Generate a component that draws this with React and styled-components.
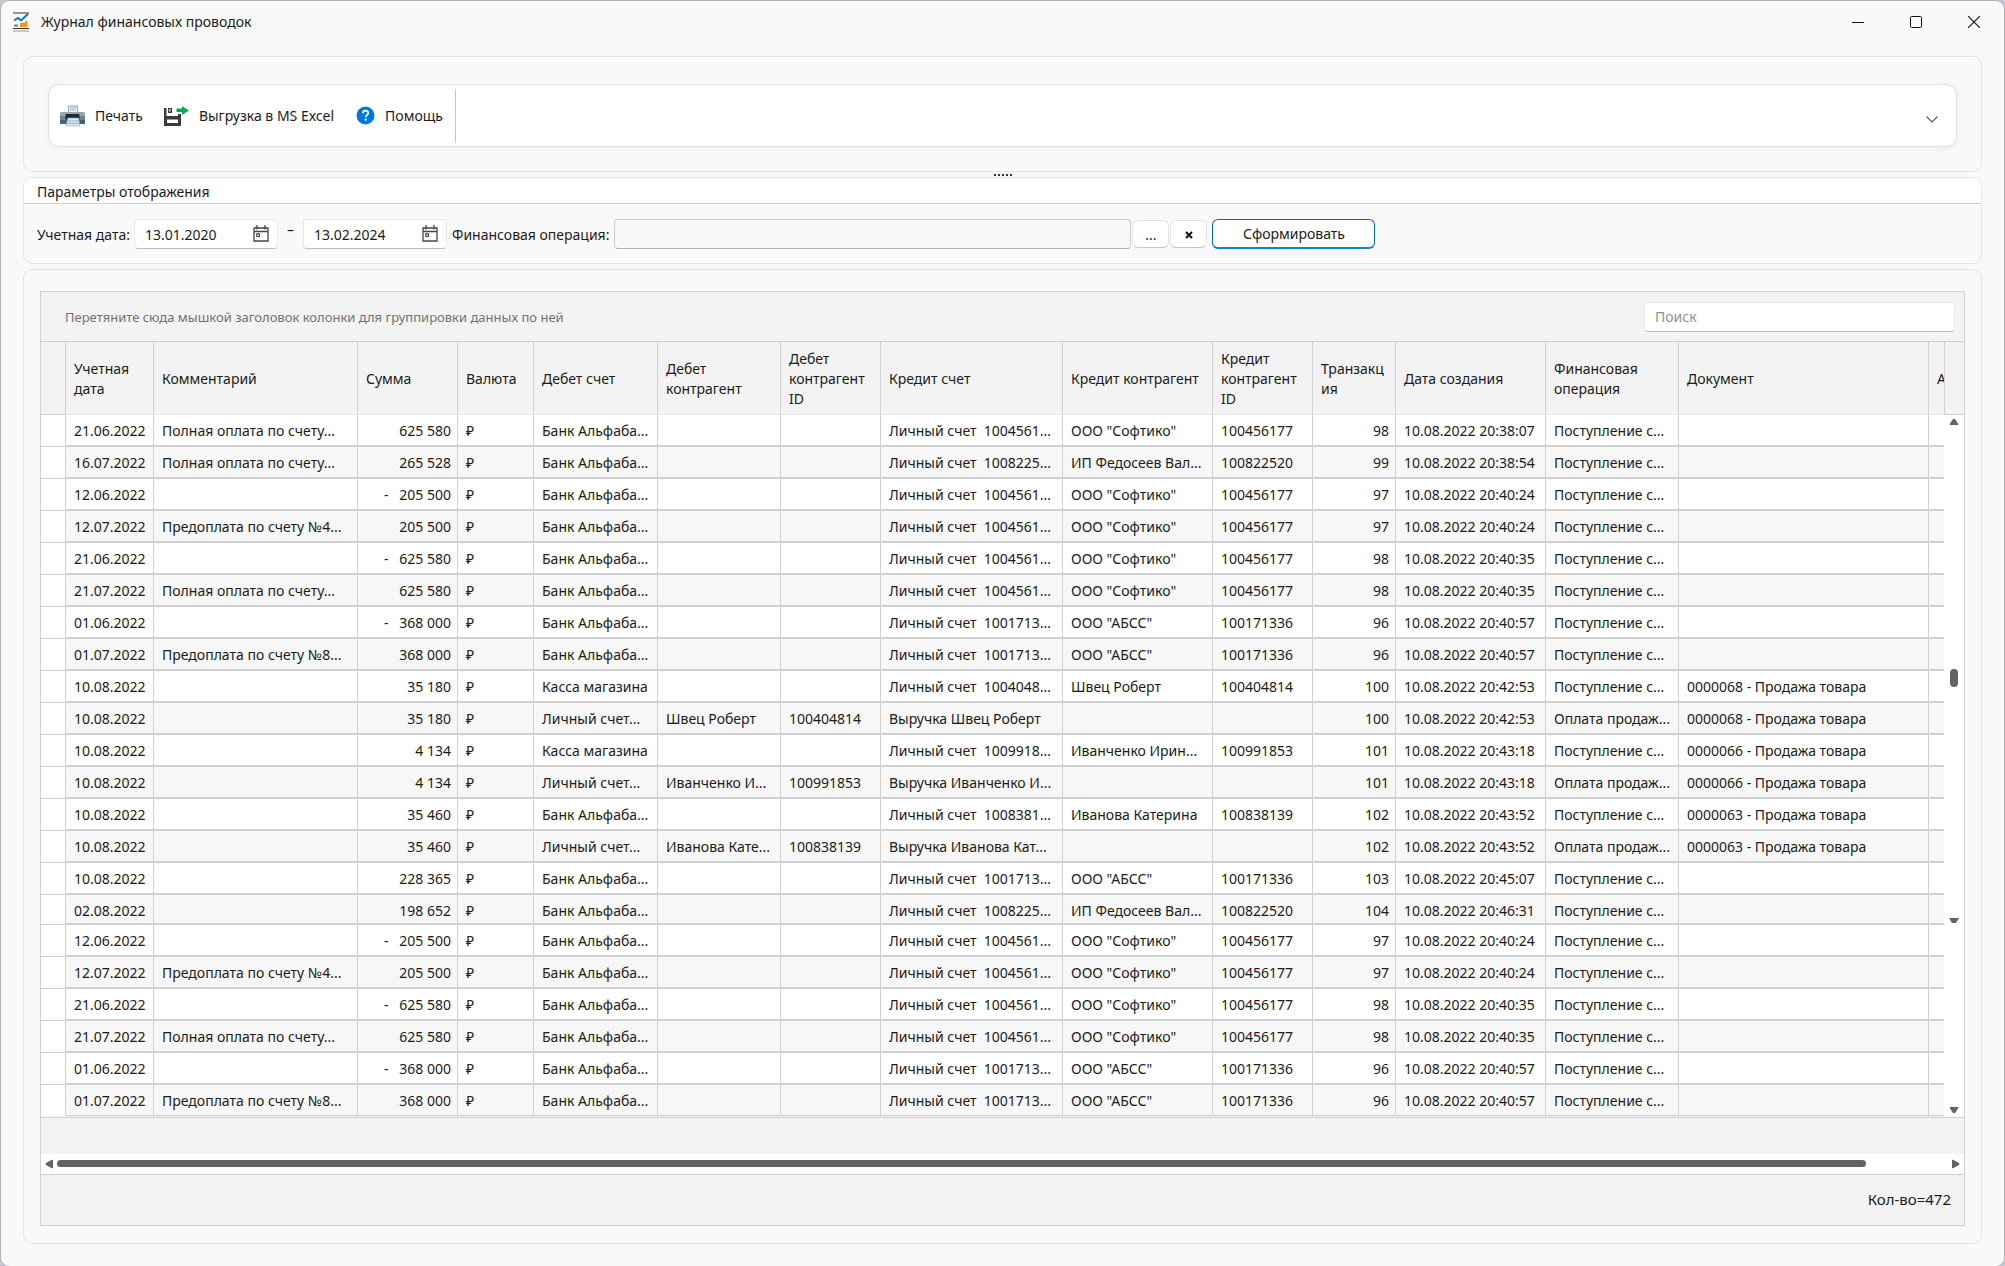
import React from "react";
import styled, { createGlobalStyle, css } from "styled-components";

const line = "#d0d0d0";
const soft = "#e5e5e5";

const GlobalStyle = createGlobalStyle`
  *, *::before, *::after { box-sizing: border-box; }
  body {
    margin: 0;
    background: #c3cad6;
    color: #1b1b1b;
    font-family: "Noto Sans", "Open Sans", "Liberation Sans", sans-serif;
    font-size: 14px;
    line-height: 20px;
  }
  button, input { font: inherit; color: inherit; }
`;

const Window = styled.div`
  min-height: 100vh;
  display: flex;
  flex-direction: column;
  background: #f9f9f9;
  border: 1px solid #b0b0b0;
  border-radius: 9px;
  padding: 0 22px 22px;
`;

const TitleBar = styled.header`
  display: flex;
  align-items: center;
  height: 42px;
  margin: 0 -11px 13px;
`;

const Title = styled.h1`
  flex: 1;
  margin: 0 0 0 11px;
  font-size: 14px;
  font-weight: 400;
`;

const WindowControls = styled.div`
  display: flex;
`;

const PlainButton = styled.button`
  display: flex;
  align-items: center;
  justify-content: center;
  border: 0;
  padding: 0;
  background: none;
`;

const WindowButton = styled(PlainButton)`
  width: 58px;
  height: 40px;

  &:last-child { margin-right: -10px; }
`;

const Panel = styled.section`
  border: 1px solid ${soft};
  border-radius: 9px;
`;

const ToolbarPanel = styled(Panel)`
  padding: 27px 24px 24px;
`;

const Toolbar = styled.div`
  display: flex;
  align-items: center;
  height: 63px;
  padding: 0 18px 0 11px;
  background: #fff;
  border: 1px solid #e2e2e2;
  border-radius: 11px;
  box-shadow: 0 1px 6px rgba(0, 0, 0, 0.07);
`;

const ToolButton = styled(PlainButton)`
  gap: 10px;
  margin-right: 20px;
`;

const HelpButton = styled(ToolButton)`
  margin: 0 12px 0 2px;
`;

const Divider = styled.div`
  width: 1px;
  height: 54px;
  background: #c8c8c8;
`;

const ChevronButton = styled(PlainButton)`
  margin-left: auto;
  padding-top: 8px;
`;

const Gripper = styled.div`
  display: flex;
  justify-content: center;
  align-items: center;
  gap: 2px;
  height: 5px;
`;

const Dot = styled.i`
  width: 2px;
  height: 2px;
  background: #333;
`;

const FilterPanel = styled(Panel)`
  margin-bottom: 5px;
  overflow: hidden;
`;

const FilterTitle = styled.h2`
  margin: 0;
  padding: 4px 13px 1px;
  font-size: 14px;
  font-weight: 400;
  line-height: 20px;
  background: #fff;
  border-bottom: 1px solid ${line};
`;

const FilterForm = styled.form`
  display: flex;
  align-items: center;
  height: 59px;
  padding: 0 13px;
`;

const fieldBox = css`
  height: 30px;
  background: #fff;
  border: 1px solid #e8e8e8;
  border-bottom-color: #bdbdbd;
  border-radius: 4px;
`;

const FieldLabel = styled.label`
  flex: none;
  margin-right: 4px;
  padding-top: 2px;
  white-space: nowrap;
`;

const DateBox = styled.div`
  ${fieldBox}
  flex: none;
  display: flex;
  align-items: center;
  width: 144px;
  padding: 0 8px 0 10px;
`;

const DateInput = styled.input`
  flex: 1;
  min-width: 0;
  padding: 2px 0 0;
  border: 0;
  outline: 0;
  background: none;
`;

const Dash = styled.span`
  flex: none;
  width: 25px;
  padding-bottom: 8px;
  text-align: center;
`;

const OperationLabel = styled(FieldLabel)`
  margin: 0 5px;
`;

const OperationInput = styled.input`
  height: 30px;
  width: 517px;
  min-width: 120px;
  background: #f8f8f8;
  border: 1px solid #cdcdcd;
  border-bottom-color: #b0b0b0;
  border-radius: 4px;
`;

const SmallButton = styled.button`
  width: 37px;
  height: 28px;
  margin-left: 1px;
  padding: 2px 0 0;
  display: flex;
  justify-content: center;
  align-items: center;
  background: #fff;
  border: 1px solid #e4e4e4;
  border-bottom-color: #c6c6c6;
  border-radius: 6px;
`;

const SubmitButton = styled.button`
  width: 163px;
  height: 30px;
  margin-left: 5px;
  padding: 2px 0 0;
  background: #fff;
  border: 1px solid #0067c0;
  border-bottom: 2px solid #0f84d2;
  border-radius: 6px;
`;

const GridPanel = styled(Panel)`
  flex: 1;
  display: flex;
  padding: 21px 16px 17px;
`;

const Grid = styled.div`
  flex: 1;
  min-width: 0;
  display: flex;
  flex-direction: column;
  background: #f3f3f3;
  border: 1px solid ${line};
`;

const GroupBar = styled.div`
  display: flex;
  align-items: center;
  justify-content: space-between;
  height: 50px;
  padding: 0 9px 0 24px;
  border-bottom: 1px solid ${line};
  font-size: 13px;
  color: #717171;
`;

const SearchInput = styled.input`
  ${fieldBox}
  width: 311px;
  padding: 0 10px;
  font-size: 14px;

  &::placeholder { color: #929292; }
`;

const GridBody = styled.div`
  display: flex;
  border-bottom: 1px solid ${line};
`;

const TableClip = styled.div`
  flex: 1;
  min-width: 0;
  overflow: hidden;
  padding-bottom: 1px;
`;

const Table = styled.table`
  width: 100%;
  table-layout: fixed;
  border-collapse: separate;
  border-spacing: 0;
`;

const HeadCell = styled.th`
  height: 73px;
  padding: 2px 8px 0;
  overflow: hidden;
  text-align: left;
  font-weight: 400;
  overflow-wrap: anywhere;
  border-right: 1px solid ${line};
  border-bottom: 1px solid #e9e9e9;

  &:first-child { border-bottom-color: ${line}; }
  &:last-child { border-right: 0; padding-right: 0; white-space: nowrap; overflow-wrap: normal; }
`;

const Row = styled.tr`
  height: ${(p) => (p.$short ? 30 : 32)}px;
  background: #fff;

  &:nth-child(even) { background: #f7f7f7; }
  &:last-child { height: 31px; }
`;

const Cell = styled.td`
  padding: 6px ${(p) => (p.$right ? 6 : 0)}px 0 8px;
  overflow: hidden;
  vertical-align: top;
  white-space: pre;
  text-align: ${(p) => (p.$right ? "right" : "left")};
  border-right: 1px solid ${line};
  border-bottom: 2px solid ${line};

  &:last-child { border-right: 0; }
  ${Row}:last-child & { border-bottom-width: 1px; }
`;

const Indicator = styled.td`
  padding: 0;
  background: #fff;
  border-right: 1px solid ${line};
  border-bottom: 1px solid ${line};

  ${Row}:last-child & { border-bottom-color: #fff; }
`;

const VerticalScroll = styled.div`
  width: 20px;
  display: flex;
  flex-direction: column;
  background: #fff;
`;

const ScrollHead = styled.div`
  height: 73px;
  background: #f3f3f3;
  border-left: 1px solid ${line};
  border-bottom: 1px solid ${line};
`;

const VerticalTrack = styled.div`
  flex: 1;
  display: grid;
  justify-items: center;
  grid-template-rows: 242fr 18px 231fr 5px 182fr;
`;

const Thumb = styled.div`
  background: #636363;
  border-radius: 4px;
`;

const VerticalThumb = styled(Thumb)`
  grid-row: 2;
  width: 8px;
`;

const Marker = styled.svg`
  grid-row: 4;
`;

const ArrowButton = styled(PlainButton)`
  height: 13px;
`;

const HorizontalScroll = styled.div`
  display: flex;
  align-items: center;
  height: 21px;
  margin-top: 36px;
  padding: 0 4px 1px;
  background: #fff;
  border-bottom: 1px solid ${line};
`;

const HorizontalTrack = styled.div`
  flex: 1;
  padding: 0 86px 0 4px;
`;

const HorizontalThumb = styled(Thumb)`
  height: 7px;
`;

const GridFooter = styled.footer`
  flex: 1;
  min-height: 50px;
  display: flex;
  align-items: center;
  justify-content: flex-end;
  padding: 0 13px 2px;
  font-size: 15px;
`;

const columns = [
  { w: 25, t: "" },
  { w: 88, t: "Учетная дата" },
  { w: 204, t: "Комментарий" },
  { w: 100, t: "Сумма", right: true },
  { w: 76, t: "Валюта" },
  { w: 124, t: "Дебет счет" },
  { w: 123, t: "Дебет контрагент" },
  { w: 100, t: "Дебет контрагент ID" },
  { w: 182, t: "Кредит счет" },
  { w: 150, t: "Кредит контрагент" },
  { w: 100, t: "Кредит контрагент ID" },
  { w: 83, t: "Транзакция", right: true },
  { w: 150, t: "Дата создания" },
  { w: 133, t: "Финансовая операция" },
  { t: "Документ" },
  { w: 15, t: "А" },
];

const full = "Полная оплата по счету...";
const pre4 = "Предоплата по счету №4...";
const pre8 = "Предоплата по счету №8...";
const bank = "Банк Альфаба...";
const cash = "Касса магазина";
const own = "Личный счет...";
const acc = (n) => `Личный счет  ${n}...`;
const soft1 = 'ООО "Софтико"';
const abss = 'ООО "АБСС"';
const fed = "ИП Федосеев Вал...";
const inc = "Поступление с...";
const pay = "Оплата продаж...";
const sale = (n) => `${n} - Продажа товара`;

const row = (date, note, sum, debit, dName, dId, credit, cName, cId, tr, time, op, doc) => [
  date, note, sum, "₽", debit, dName, dId, credit, cName, cId, tr, `10.08.2022 ${time}`, op, doc, "",
];

const repeated = [
  row("12.06.2022", "", "-   205 500", bank, "", "", acc("1004561"), soft1, "100456177", "97", "20:40:24", inc, ""),
  row("12.07.2022", pre4, "205 500", bank, "", "", acc("1004561"), soft1, "100456177", "97", "20:40:24", inc, ""),
  row("21.06.2022", "", "-   625 580", bank, "", "", acc("1004561"), soft1, "100456177", "98", "20:40:35", inc, ""),
  row("21.07.2022", full, "625 580", bank, "", "", acc("1004561"), soft1, "100456177", "98", "20:40:35", inc, ""),
  row("01.06.2022", "", "-   368 000", bank, "", "", acc("1001713"), abss, "100171336", "96", "20:40:57", inc, ""),
  row("01.07.2022", pre8, "368 000", bank, "", "", acc("1001713"), abss, "100171336", "96", "20:40:57", inc, ""),
];

const rows = [
  row("21.06.2022", full, "625 580", bank, "", "", acc("1004561"), soft1, "100456177", "98", "20:38:07", inc, ""),
  row("16.07.2022", full, "265 528", bank, "", "", acc("1008225"), fed, "100822520", "99", "20:38:54", inc, ""),
  ...repeated,
  row("10.08.2022", "", "35 180", cash, "", "", acc("1004048"), "Швец Роберт", "100404814", "100", "20:42:53", inc, sale("0000068")),
  row("10.08.2022", "", "35 180", own, "Швец Роберт", "100404814", "Выручка Швец Роберт", "", "", "100", "20:42:53", pay, sale("0000068")),
  row("10.08.2022", "", "4 134", cash, "", "", acc("1009918"), "Иванченко Ирин...", "100991853", "101", "20:43:18", inc, sale("0000066")),
  row("10.08.2022", "", "4 134", own, "Иванченко И...", "100991853", "Выручка Иванченко И...", "", "", "101", "20:43:18", pay, sale("0000066")),
  row("10.08.2022", "", "35 460", bank, "", "", acc("1008381"), "Иванова Катерина", "100838139", "102", "20:43:52", inc, sale("0000063")),
  row("10.08.2022", "", "35 460", own, "Иванова Кате...", "100838139", "Выручка Иванова Кат...", "", "", "102", "20:43:52", pay, sale("0000063")),
  row("10.08.2022", "", "228 365", bank, "", "", acc("1001713"), abss, "100171336", "103", "20:45:07", inc, ""),
  row("02.08.2022", "", "198 652", bank, "", "", acc("1008225"), fed, "100822520", "104", "20:46:31", inc, ""),
  ...repeated,
];

const shortRow = 15;

const AppIcon = () => (
  <svg width="18" height="20" viewBox="0 0 18 20" aria-hidden="true">
    <path d="M1 1h16M1 16.500h16" stroke="#333" strokeWidth="1.200" />
    <path d="M1 19h16" stroke="#999" strokeWidth="1" />
    <path d="M2 8.500L6 6l3 2.500L16 2" fill="none" stroke="#0a7ac0" strokeWidth="2" />
    <path d="M2 13.500h4" stroke="#777" strokeWidth="2" />
    <path d="M8 11h2.500v4H8zM10.500 10.500h2.500V15h-2.500zM13 9h2.500v6H13z" fill="#f59a0c" />
  </svg>
);

const PrinterIcon = () => (
  <svg width="25" height="22" viewBox="0 0 25 22" aria-hidden="true">
    <path d="M8.500 1h9v8h-9z" fill="#eef4f9" stroke="#8fa3b0" />
    <path d="M10 3h6M10 5h6" stroke="#9db6ca" />
    <path d="M0 8l2-1h21l2 1v10.500l-2 .5H2l-2-.5z" fill="#6f8690" />
    <path d="M0 8l2-1h21l2 1v3H0z" fill="#95a8b1" />
    <path d="M0 15h25v3.500l-2 .5H2l-2-.5z" fill="#3f6470" />
    <path d="M5.500 9h14v5.500h-14z" fill="#23282c" />
    <path d="M8 13h10.500l1.500 8H6z" fill="#dbe9f8" stroke="#8aa8c6" strokeWidth=".6" />
    <path d="M8 16h10.500M7.500 18.500h11.500" stroke="#90b4d8" />
  </svg>
);

const ExportIcon = () => (
  <svg width="26" height="22" viewBox="0 0 26 22" aria-hidden="true">
    <path d="M1 3h2.500v8H15V9h3v12H1zM4 14.500V18h11v-3.500z" fill="#3b3b3b" fillRule="evenodd" />
    <path d="M5 3h4v5H5zM6.200 4v2.500h1.300V4z" fill="#3b3b3b" fillRule="evenodd" />
    <path d="M13.500 3.500h5.500V1l7 4.500L19 10V7h-5.500z" fill="#0fa958" />
  </svg>
);

const HelpIcon = () => (
  <svg width="19" height="19" viewBox="0 0 19 19" aria-hidden="true">
    <circle cx="9.500" cy="9.500" r="9" fill="#0078d7" />
    <path d="M6.900 7.200c0-3.400 5.400-3.200 5.400-.3 0 1.900-2.600 2-2.600 4.300" fill="none" stroke="#fff" strokeWidth="1.700" />
    <circle cx="9.700" cy="13.700" r="1.100" fill="#fff" />
  </svg>
);

const CalendarIcon = () => (
  <svg width="16" height="17" viewBox="0 0 16 17" aria-hidden="true">
    <path d="M1 3h14v13H1zM1 6.500h14M4 0v4.500M12 0v4.500" fill="none" stroke="#444" strokeWidth="1.300" />
    <path d="M3.800 8.800h2.700v2.700H3.800z" fill="none" stroke="#444" strokeWidth="1.200" />
  </svg>
);

const DateField = ({ id, value, label }) => (
  <DateBox>
    <DateInput id={id} defaultValue={value} aria-label={label} />
    <PlainButton type="button" aria-label="Календарь"><CalendarIcon /></PlainButton>
  </DateBox>
);

const Arrow = ({ d, w, h }) => (
  <svg width={w} height={h} viewBox={`0 0 ${w} ${h}`} aria-hidden="true">
    <path d={d} fill="#636363" stroke="#636363" strokeLinejoin="round" />
  </svg>
);

export default function App() {
  return (
    <>
      <GlobalStyle />
      <Window>
        <TitleBar>
          <AppIcon />
          <Title>Журнал финансовых проводок</Title>
          <WindowControls>
            <WindowButton aria-label="Свернуть">
              <svg width="12" height="12"><path d="M0 6.500h12" stroke="#111" /></svg>
            </WindowButton>
            <WindowButton aria-label="Развернуть">
              <svg width="12" height="12"><rect x=".5" y=".5" width="11" height="11" rx="1" fill="none" stroke="#111" /></svg>
            </WindowButton>
            <WindowButton aria-label="Закрыть">
              <svg width="12" height="12"><path d="M0 0l12 12M12 0L0 12" stroke="#111" strokeWidth="1.100" /></svg>
            </WindowButton>
          </WindowControls>
        </TitleBar>

        <ToolbarPanel>
          <Toolbar>
            <ToolButton><PrinterIcon />Печать</ToolButton>
            <ToolButton><ExportIcon />Выгрузка в MS Excel</ToolButton>
            <HelpButton><HelpIcon />Помощь</HelpButton>
            <Divider />
            <ChevronButton aria-label="Ещё">
              <svg width="12" height="7"><path d="M.5 .5L6 6l5.500-5.500" fill="none" stroke="#555" strokeWidth="1.100" /></svg>
            </ChevronButton>
          </Toolbar>
        </ToolbarPanel>

        <Gripper><Dot /><Dot /><Dot /><Dot /><Dot /></Gripper>

        <FilterPanel>
          <FilterTitle>Параметры отображения</FilterTitle>
          <FilterForm onSubmit={(e) => e.preventDefault()}>
            <FieldLabel htmlFor="from">Учетная дата:</FieldLabel>
            <DateField id="from" value="13.01.2020" />
            <Dash>–</Dash>
            <DateField id="to" value="13.02.2024" label="Учетная дата по" />
            <OperationLabel htmlFor="operation">Финансовая операция:</OperationLabel>
            <OperationInput id="operation" readOnly />
            <SmallButton type="button">...</SmallButton>
            <SmallButton type="button" aria-label="Очистить">
              <svg width="8" height="8"><path d="M1 1l6 6M7 1L1 7" stroke="#111" strokeWidth="2" /></svg>
            </SmallButton>
            <SubmitButton type="submit">Сформировать</SubmitButton>
          </FilterForm>
        </FilterPanel>

        <GridPanel>
          <Grid>
            <GroupBar>
              Перетяните сюда мышкой заголовок колонки для группировки данных по ней
              <SearchInput type="search" placeholder="Поиск" aria-label="Поиск" />
            </GroupBar>
            <GridBody>
              <TableClip>
                <Table>
                  <colgroup>
                    {columns.map((c, i) => <col key={i} width={c.w} />)}
                  </colgroup>
                  <thead>
                    <tr>{columns.map((c, i) => <HeadCell key={i}>{c.t}</HeadCell>)}</tr>
                  </thead>
                  <tbody>
                    {rows.map((cells, i) => (
                      <Row key={i} $short={i === shortRow}>
                        <Indicator />
                        {cells.map((text, j) => (
                          <Cell key={j} $right={columns[j + 1].right}>{text}</Cell>
                        ))}
                      </Row>
                    ))}
                  </tbody>
                </Table>
              </TableClip>
              <VerticalScroll>
                <ScrollHead />
                <ArrowButton aria-label="Вверх"><Arrow w={10} h={7} d="M1 6.500L4 1.500h2L9 6.500z" /></ArrowButton>
                <VerticalTrack>
                  <VerticalThumb />
                  <Marker width="10" height="5" viewBox="0 0 10 5"><path d="M0 0h10L7 5H3z" fill="#636363" /></Marker>
                </VerticalTrack>
                <ArrowButton aria-label="Вниз"><Arrow w={10} h={7} d="M1 .5L4 5.500h2L9 .5z" /></ArrowButton>
              </VerticalScroll>
            </GridBody>
            <HorizontalScroll>
              <ArrowButton aria-label="Влево"><Arrow w={8} h={10} d="M7.500 1L1 4.500v1L7.500 9z" /></ArrowButton>
              <HorizontalTrack><HorizontalThumb /></HorizontalTrack>
              <ArrowButton aria-label="Вправо"><Arrow w={8} h={10} d="M.5 1L7 4.500v1L.5 9z" /></ArrowButton>
            </HorizontalScroll>
            <GridFooter>Кол-во=472</GridFooter>
          </Grid>
        </GridPanel>
      </Window>
    </>
  );
}
